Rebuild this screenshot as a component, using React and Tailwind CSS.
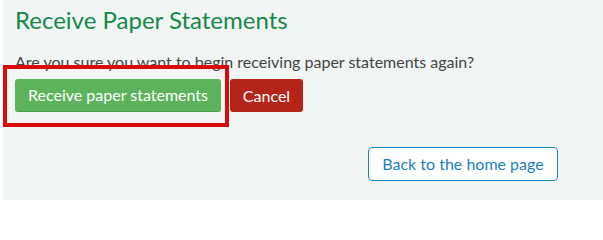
import React from "react";

const font = { fontFamily: "Lato, 'Open Sans', sans-serif" };

export default function App() {
  return (
    <div className="w-[603px] h-[200px] bg-[#f1f6f4] border-l-[3px] border-white" style={font}>
      <div className="pl-[12px] pt-[6px]">
        <h1 className="text-[24px] leading-[28px] text-[#16884a] font-normal">Receive Paper Statements</h1>
        <p className="mt-[18px] text-[16px] leading-[20px] text-[#444]">
          Are you sure you want to begin receiving paper statements again?
        </p>
        <div className="relative flex mt-[7px]">
          <div className="absolute left-[-12px] top-[-14px] w-[226px] h-[62px] border-[4px] border-[#d80c0c]" />
          <button className="h-[33px] w-[206px] rounded-[3px] bg-[#5cb35c] text-white text-[16px] border-b border-[#4c9a4c]">
            Receive paper statements
          </button>
          <button className="ml-[9px] h-[33px] w-[73px] rounded-[3px] bg-[#b42418] text-white text-[16px]">
            Cancel
          </button>
        </div>
        <div className="flex justify-end pr-[45px] mt-[35px]">
          <button className="h-[34px] w-[190px] rounded-[4px] bg-white border border-[#1b87c9] text-[#1a7fc2] text-[16px]">
            Back to the home page
          </button>
        </div>
      </div>
    </div>
  );
}
